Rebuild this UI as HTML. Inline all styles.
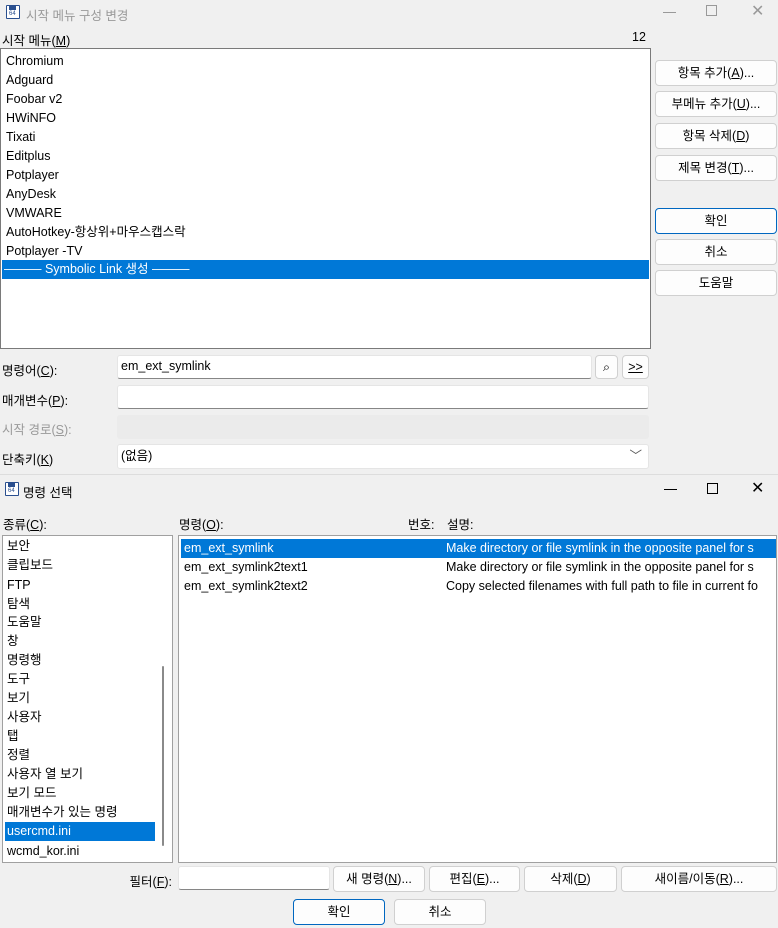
<!DOCTYPE html>
<html><head><meta charset="utf-8"><style>
*{box-sizing:border-box;margin:0;padding:0;white-space:nowrap}
body{width:778px;height:928px;background:#f0f0f0;font-family:"Liberation Sans","Noto Sans CJK KR",sans-serif;font-size:12.5px;color:#000;position:relative;overflow:hidden}
.a{position:absolute}
.box{position:absolute;background:#fff;border:1px solid #7a7a7a}
.btn{position:absolute;background:#fdfdfd;border:1px solid #d0d0d0;border-radius:4px;text-align:center;line-height:24px;font-size:12.5px}
.inp{position:absolute;background:#fff;border:1px solid #e5e5e5;border-bottom:1px solid #868686;border-radius:3px;padding-left:3px;line-height:21px}
.it{position:absolute;left:5px;height:19px;line-height:19px}
.sel{background:#0078d7;color:#fff}
u{text-decoration:underline}
.ic{position:absolute;width:14px;height:14px;border:1.5px solid #2a4f8f;border-radius:1px;background:#fff}
.ic:before{content:"";position:absolute;left:2px;top:0;width:7px;height:4px;background:#2a4f8f}
.ic:after{content:"64";position:absolute;left:2px;top:5px;font-size:6px;line-height:6px;color:#2a4f8f}
</style></head><body>
<!-- top dialog -->
<div class="ic" style="left:6px;top:5px"></div>
<div class="a" style="left:26px;top:5px;color:#999">시작 메뉴 구성 변경</div>
<div class="a" style="left:663px;top:12px;width:13px;height:1px;background:#999"></div>
<div class="a" style="left:706px;top:5px;width:11px;height:11px;border:1px solid #999"></div>
<div class="a" style="left:751px;top:1px;color:#999;font-size:16px">✕</div>
<div class="a" style="left:2px;top:30px">시작 메뉴(<u>M</u>)</div>
<div class="a" style="left:632px;top:30px">12</div>
<div class="box" style="left:0;top:48px;width:651px;height:301px">
<div class="it" style="top:3px">Chromium</div>
<div class="it" style="top:22px">Adguard</div>
<div class="it" style="top:41px">Foobar v2</div>
<div class="it" style="top:60px">HWiNFO</div>
<div class="it" style="top:79px">Tixati</div>
<div class="it" style="top:98px">Editplus</div>
<div class="it" style="top:117px">Potplayer</div>
<div class="it" style="top:136px">AnyDesk</div>
<div class="it" style="top:155px">VMWARE</div>
<div class="it" style="top:174px">AutoHotkey-항상위+마우스캡스락</div>
<div class="it" style="top:193px">Potplayer -TV</div>
<div class="it sel" style="top:211px;left:1px;width:647px;padding-left:2px">——— Symbolic Link 생성 ———</div>
</div>
<div class="btn" style="left:655px;top:60px;width:122px">항목 추가(<u>A</u>)...</div>
<div class="btn" style="left:655px;top:91px;width:122px">부메뉴 추가(<u>U</u>)...</div>
<div class="btn" style="left:655px;top:123px;width:122px">항목 삭제(<u>D</u>)</div>
<div class="btn" style="left:655px;top:155px;width:122px">제목 변경(<u>T</u>)...</div>
<div class="btn" style="left:655px;top:208px;width:122px;border:1px solid #0067c0">확인</div>
<div class="btn" style="left:655px;top:239px;width:122px">취소</div>
<div class="btn" style="left:655px;top:270px;width:122px">도움말</div>
<div class="a" style="left:2px;top:360px">명령어(<u>C</u>):</div>
<div class="inp" style="left:117px;top:355px;width:475px;height:24px">em_ext_symlink</div>
<div class="btn" style="left:595px;top:355px;width:23px;height:24px;line-height:22px">⌕</div>
<div class="btn" style="left:622px;top:355px;width:27px;height:24px;line-height:22px"><u>&gt;&gt;</u></div>
<div class="a" style="left:2px;top:390px">매개변수(<u>P</u>):</div>
<div class="inp" style="left:117px;top:385px;width:532px;height:24px"></div>
<div class="a" style="left:2px;top:419px;color:#999">시작 경로(<u>S</u>):</div>
<div class="a" style="left:117px;top:415px;width:532px;height:24px;background:#ebebeb;border-radius:3px"></div>
<div class="a" style="left:2px;top:449px">단축키(<u>K</u>)</div>
<div class="inp" style="left:117px;top:444px;width:532px;height:25px;border-bottom-color:#e5e5e5;line-height:22px">(없음)<span style="position:absolute;right:6px;color:#555">﹀</span></div>
<!-- bottom dialog -->
<div class="a" style="left:0;top:474px;width:778px;height:454px;background:#f0f0f0;border-top:1px solid #ddd"></div>
<div class="ic" style="left:5px;top:482px"></div>
<div class="a" style="left:23px;top:482px">명령 선택</div>
<div class="a" style="left:664px;top:489px;width:13px;height:1px;background:#000"></div>
<div class="a" style="left:707px;top:483px;width:11px;height:11px;border:1px solid #000"></div>
<div class="a" style="left:751px;top:478px;font-size:16px">✕</div>
<div class="a" style="left:3px;top:514px">종류(<u>C</u>):</div>
<div class="a" style="left:179px;top:514px">명령(<u>O</u>):</div>
<div class="a" style="left:408px;top:514px">번호:</div>
<div class="a" style="left:447px;top:514px">설명:</div>
<div class="box" style="left:2px;top:535px;width:171px;height:328px;border-color:#a0a0a0">
<div class="it" style="top:1px;left:4px">보안</div>
<div class="it" style="top:20px;left:4px">클립보드</div>
<div class="it" style="top:40px;left:4px">FTP</div>
<div class="it" style="top:59px;left:4px">탐색</div>
<div class="it" style="top:77px;left:4px">도움말</div>
<div class="it" style="top:96px;left:4px">창</div>
<div class="it" style="top:115px;left:4px">명령행</div>
<div class="it" style="top:134px;left:4px">도구</div>
<div class="it" style="top:153px;left:4px">보기</div>
<div class="it" style="top:172px;left:4px">사용자</div>
<div class="it" style="top:191px;left:4px">탭</div>
<div class="it" style="top:210px;left:4px">정렬</div>
<div class="it" style="top:229px;left:4px">사용자 열 보기</div>
<div class="it" style="top:248px;left:4px">보기 모드</div>
<div class="it" style="top:267px;left:4px">매개변수가 있는 명령</div>
<div class="it sel" style="top:286px;left:2px;width:150px;padding-left:2px">usercmd.ini</div>
<div class="it" style="top:306px;left:4px">wcmd_kor.ini</div>
<div class="a" style="left:159px;top:130px;width:2px;height:180px;background:#8a8a8a;border-radius:1px"></div>
</div>
<div class="box" style="left:178px;top:535px;width:599px;height:328px;border-color:#a0a0a0;overflow:hidden">
<div class="it sel" style="top:3px;left:2px;width:600px;padding-left:3px">em_ext_symlink<span style="position:absolute;left:265px">Make directory or file symlink in the opposite panel for s</span></div>
<div class="it" style="top:22px">em_ext_symlink2text1<span style="position:absolute;left:262px">Make directory or file symlink in the opposite panel for s</span></div>
<div class="it" style="top:41px">em_ext_symlink2text2<span style="position:absolute;left:262px">Copy selected filenames with full path to file in current fo</span></div>
</div>
<div class="a" style="left:110px;width:62px;text-align:right;top:871px">필터(<u>F</u>):</div>
<div class="inp" style="left:178px;top:866px;width:152px;height:24px"></div>
<div class="btn" style="left:333px;top:866px;width:92px">새 명령(<u>N</u>)...</div>
<div class="btn" style="left:429px;top:866px;width:91px">편집(<u>E</u>)...</div>
<div class="btn" style="left:524px;top:866px;width:93px">삭제(<u>D</u>)</div>
<div class="btn" style="left:621px;top:866px;width:156px">새이름/이동(<u>R</u>)...</div>
<div class="btn" style="left:293px;top:899px;width:92px;border:1px solid #0067c0">확인</div>
<div class="btn" style="left:394px;top:899px;width:92px">취소</div>
</body></html>
